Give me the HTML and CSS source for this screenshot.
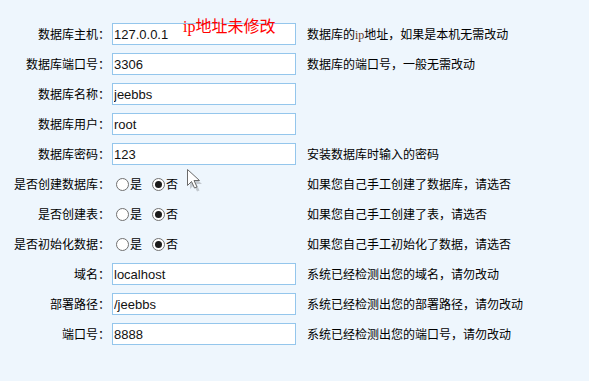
FILE: index.html
```html
<!DOCTYPE html>
<html lang="zh-cn">
<head>
    <meta charset="UTF-8">
    <title>安装 - 数据库设置</title>
    <link rel="stylesheet" href="styles.css">
</head>
<body>

<!-- 安装表单 -->
<form class="setup">
    <div class="row">
        <label class="label">数据库主机：</label>
        <input class="field" type="text" value="127.0.0.1">
        <span class="tip">数据库的<span class="latin">ip</span>地址，如果是本机无需改动</span>
    </div>
    <div class="row">
        <label class="label">数据库端口号：</label>
        <input class="field" type="text" value="3306">
        <span class="tip">数据库的端口号，一般无需改动</span>
    </div>
    <div class="row">
        <label class="label">数据库名称：</label>
        <input class="field" type="text" value="jeebbs">
    </div>
    <div class="row">
        <label class="label">数据库用户：</label>
        <input class="field" type="text" value="root">
    </div>
    <div class="row">
        <label class="label">数据库密码：</label>
        <input class="field" type="text" value="123">
        <span class="tip">安装数据库时输入的密码</span>
    </div>
    <div class="row">
        <label class="label">是否创建数据库：</label>
        <span class="choice">
            <input class="radio" type="radio" name="createDb">是
            <input class="radio radio-second" type="radio" name="createDb" checked>否
        </span>
        <span class="tip">如果您自己手工创建了数据库，请选否</span>
    </div>
    <div class="row">
        <label class="label">是否创建表：</label>
        <span class="choice">
            <input class="radio" type="radio" name="createTable">是
            <input class="radio radio-second" type="radio" name="createTable" checked>否
        </span>
        <span class="tip">如果您自己手工创建了表，请选否</span>
    </div>
    <div class="row">
        <label class="label">是否初始化数据：</label>
        <span class="choice">
            <input class="radio" type="radio" name="initData">是
            <input class="radio radio-second" type="radio" name="initData" checked>否
        </span>
        <span class="tip">如果您自己手工初始化了数据，请选否</span>
    </div>
    <div class="row">
        <label class="label">域名：</label>
        <input class="field" type="text" value="localhost">
        <span class="tip">系统已经检测出您的域名，请勿改动</span>
    </div>
    <div class="row">
        <label class="label">部署路径：</label>
        <input class="field" type="text" value="/jeebbs">
        <span class="tip">系统已经检测出您的部署路径，请勿改动</span>
    </div>
    <div class="row">
        <label class="label">端口号：</label>
        <input class="field" type="text" value="8888">
        <span class="tip">系统已经检测出您的端口号，请勿改动</span>
    </div>
</form>

<!-- 截图上的标注 -->
<span class="note">ip地址未修改</span>

<svg class="pointer" width="16" height="24" viewBox="0 0 16 24">
    <path d="M2.5 3.5 L2.5 19.5 L6.5 15.5 L9.5 22 L12 21 L9 14.5 L14.5 14.5 Z" fill="#000" opacity="0.18" transform="translate(1.5 1.5)"/>
    <path d="M1.5 1.5 L1.5 17.5 L5.5 13.5 L8.5 20 L11 19 L8 12.5 L13.5 12.5 Z" fill="#fff" stroke="#6a6a6a" stroke-width="1"/>
</svg>

</body>
</html>
```

FILE: styles.css
```css
body {
    margin: 0;
    padding: 0;
    background-color: #eef6fd;
    font-family: "Liberation Serif", "Noto Sans CJK SC", serif;
    font-size: 12px;
    color: #000;
    height: 100vh;
    position: relative;
}

.setup {
    padding-top: 19px;
}

.row {
    display: flex;
    align-items: center;
    height: 30px;
}

.label {
    width: 110px;
    text-align: right;
    flex-shrink: 0;
}

.field {
    width: 184px;
    height: 22px;
    margin: 0 0 0 2px;
    padding: 0 1px;
    box-sizing: border-box;
    border: 1px solid #94c6ec;
    background-color: #fff;
    font-family: "Liberation Sans", Arial, sans-serif;
    font-size: 13px;
    color: #111;
    outline: none;
    flex-shrink: 0;
}

.choice {
    width: 184px;
    margin-left: 2px;
    display: flex;
    align-items: center;
    flex-shrink: 0;
}

.radio {
    appearance: none;
    -webkit-appearance: none;
    width: 13px;
    height: 13px;
    margin: 0 1px 0 4px;
    border: 1px solid #707070;
    border-radius: 50%;
    background-color: #fff;
    box-sizing: border-box;
    position: relative;
}

.radio-second {
    margin-left: 10px;
}

.radio:checked::after {
    content: "";
    position: absolute;
    left: 2px;
    top: 2px;
    width: 7px;
    height: 7px;
    border-radius: 50%;
    background-color: #1a1a1a;
}

.tip {
    margin-left: 11px;
    white-space: nowrap;
}

.latin {
    color: #6b3a2a;
}

/* 红色标注，叠在第一个输入框上 */
.note {
    position: absolute;
    left: 183px;
    top: 17px;
    font-size: 16px;
    line-height: 20px;
    color: #ff0000;
}

.pointer {
    position: absolute;
    left: 186px;
    top: 168px;
}
```
